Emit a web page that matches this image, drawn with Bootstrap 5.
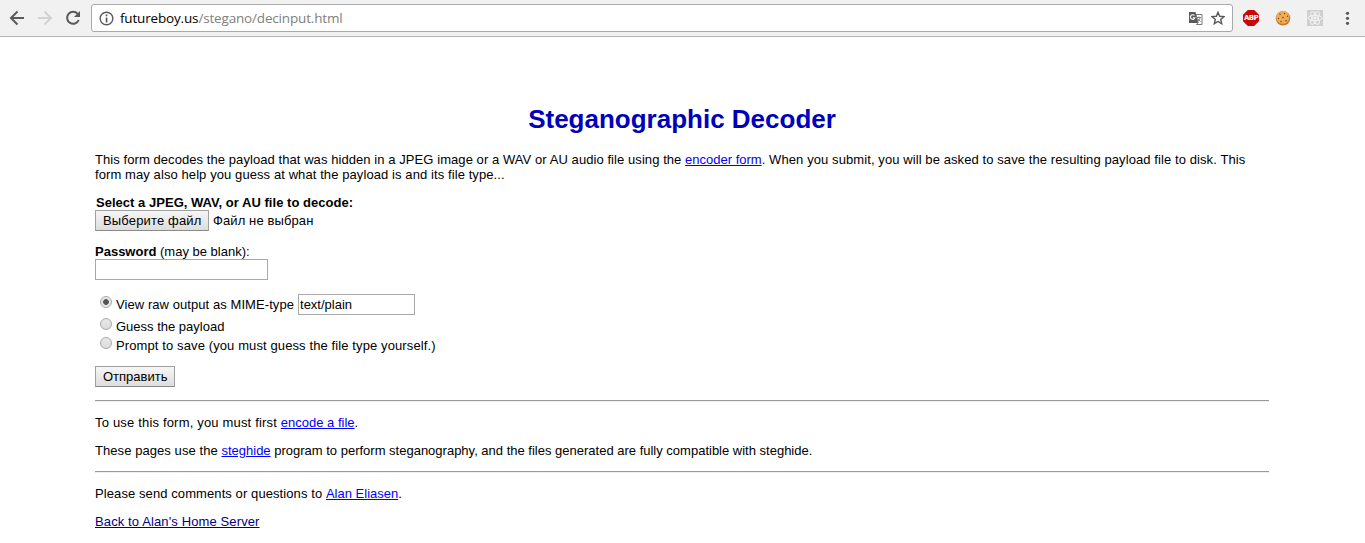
<!DOCTYPE html>
<html lang="ru">
<head>
<meta charset="utf-8">
<meta name="viewport" content="width=device-width, initial-scale=1">
<title>Steganographic Decoder</title>
<link href="https://cdn.jsdelivr.net/npm/bootstrap@5.3.0/dist/css/bootstrap.min.css" rel="stylesheet">
<style>
body{font:13px/15px "Liberation Sans",Arial,sans-serif;color:#000;background:#fff;overflow:hidden}
.toolbar{height:37px;background:#f1f1f1;border-bottom:1px solid #b6b4b6}
.toolbar svg{display:block;flex:none}
.nav-icons{width:91px;padding-left:8px;gap:10px}
.omnibox{width:1142px;height:28px;border:1px solid #a9a9a9;border-radius:3px;padding:0 7px}
.url{font:13.5px/20px "Open Sans","Noto Sans",sans-serif;letter-spacing:-.17px;color:#808080;margin-left:6px;white-space:nowrap}
.ext-icons{padding-left:10px;gap:16px}
.abp{width:16px;height:16px;background:#cb0606;clip-path:polygon(30% 0,70% 0,100% 30%,100% 70%,70% 100%,30% 100%,0 70%,0 30%);font:bold 7px/16px "DejaVu Sans",sans-serif;letter-spacing:-.6px;color:#fff}
.doc{padding:67px 96px 0 95px}
.doc h1{font-size:26px;line-height:30px;font-weight:700;color:#0000bb;margin:0 0 18px}
.doc p{margin:0 0 13px;white-space:nowrap}
.doc a{color:#00f;letter-spacing:0}
.doc a.seen{color:#000080;letter-spacing:.12px}
.ls-s{letter-spacing:.07px}
.ls-m{letter-spacing:.09px}
.ls-l{letter-spacing:.11px}
.ls-xl{letter-spacing:.18px}
.intro-start{letter-spacing:.071px}
.file-label{padding-left:1px;letter-spacing:.025px}
.rule{border:0;height:2px;background:linear-gradient(#9a9a9a 50%,#eee 50%);opacity:1;margin:0 0 13px}
.push{font:inherit;line-height:15px;height:21px;padding:2px 7px;color:#000;border:1px solid #a0a0a0;border-bottom-color:#8a8a8a;border-radius:0;background:linear-gradient(#f6f6f6,#ddd)}
.push-file{width:114px;letter-spacing:.15px;white-space:nowrap}
.field{height:21px;border:1px solid #a9a9a9;border-radius:0;padding:1px;font:inherit;color:#000}
.field-pass{width:173px}
.field-mime{width:117px;margin-left:4px}
.choices{margin:13px 0 11px}
.choice{height:19px}
.choice-first{height:22px;margin-bottom:2px}
.dot{appearance:none;width:12px;height:12px;border:1px solid #a9a9a9;border-radius:50%;background:linear-gradient(#e8e8e8,#dcdcdc);margin:0 4px 5px 5px;flex:none}
.choice .dot{margin-bottom:6px}
.dot:checked{background:radial-gradient(circle,#555 0 2.5px,#e6e6e6 3.2px)}
</style>
</head>
<body>
<header class="toolbar d-flex align-items-center">
  <nav class="nav-icons d-flex">
    <svg width="18" height="18" viewBox="0 0 18 18" fill="none" stroke="#5a5a5a" stroke-width="2"><path d="M16 9H3M9.500 2.500L3 9l6.500 6.500"/></svg>
    <svg width="18" height="18" viewBox="0 0 18 18" fill="none" stroke="#d2d2d2" stroke-width="2"><path d="M2 9h13M8.500 2.500L15 9l-6.500 6.500"/></svg>
    <svg width="18" height="18" viewBox="0 0 18 18"><path d="M13.700 4.900A6 6 0 1 0 14.700 11" fill="none" stroke="#5a5a5a" stroke-width="2"/><path d="M16 2v6h-6z" fill="#5a5a5a"/></svg>
  </nav>
  <div class="omnibox bg-white d-flex align-items-center">
    <svg width="15" height="15" viewBox="0 0 15 15"><circle cx="7.500" cy="7.500" r="6.300" fill="none" stroke="#5a5a5a" stroke-width="1.400"/><path d="M6.700 3.500h1.700v1.700H6.700zM6.700 6.500h1.700v5H6.700z" fill="#5a5a5a"/></svg>
    <span class="url"><span class="text-black">futureboy.us</span>/stegano/decinput.html</span>
    <svg class="ms-auto" width="15" height="15" viewBox="0 0 15 15"><path d="M1 1h6.500l3 11H1z" fill="#5a5a5a"/><path d="M8 3.500h6v10H8.500l1.700-2z" fill="#fff" stroke="#777"/><path d="M6.500 4.500A2.300 2.300 0 1 0 7 6.700H4.800" fill="none" stroke="#fff" stroke-width="1.100"/><path d="M9 6.500h4M11 5.500v1M12.200 6.500c-.5 2-1.500 3-2.500 4M10 8l2.500 2.700" fill="none" stroke="#777" stroke-width=".9"/></svg>
    <svg class="ms-2" width="14" height="14" viewBox="0 0 14 14"><path d="M7 1.300l1.650 4 4.350.35-3.300 2.850 1 4.200L7 10.450 3.300 12.700l1-4.200L1 5.650l4.350-.35z" fill="#fff" stroke="#5a5a5a" stroke-width="1.400"/></svg>
  </div>
  <div class="ext-icons d-flex align-items-center">
    <span class="abp d-flex justify-content-center">ABP</span>
    <svg width="16" height="16" viewBox="0 0 16 16"><circle cx="8" cy="8.300" r="7.300" fill="#c9792b"/><circle cx="7.700" cy="7.300" r="6.500" fill="#edac55"/><g fill="#70401c"><circle cx="5" cy="4.300" r=".7"/><circle cx="9.500" cy="3.500" r=".7"/><circle cx="12.500" cy="6.300" r=".7"/><circle cx="8" cy="7.500" r=".8"/><circle cx="3.500" cy="8.500" r=".7"/><circle cx="6" cy="11.500" r=".7"/><circle cx="11" cy="10.700" r=".8"/></g></svg>
    <svg width="16" height="16" viewBox="0 0 16 16"><path d="M0 0h16v16H0z" fill="#cfcfcf"/><g fill="none" stroke="#f4f4f4"><ellipse cx="8" cy="8" rx="7" ry="2.700"/><ellipse cx="8" cy="8" rx="7" ry="2.700" transform="rotate(60 8 8)"/><ellipse cx="8" cy="8" rx="7" ry="2.700" transform="rotate(120 8 8)"/></g><circle cx="8" cy="8" r="1.400" fill="#f4f4f4"/></svg>
    <svg width="16" height="16" viewBox="0 0 16 16" fill="#5a5a5a"><circle cx="8.500" cy="3.300" r="1.600"/><circle cx="8.500" cy="8.300" r="1.600"/><circle cx="8.500" cy="13.300" r="1.600"/></svg>
  </div>
</header>
<main class="doc">
  <h1 class="text-center">Steganographic Decoder</h1>
  <p class="ls-m"><span class="intro-start">This form decodes the payload that was hidden in a JPEG image or a WAV or AU audio file using the </span><a href="#">encoder form</a>. When you submit, you will be asked to save the resulting payload file to disk. This<br>form may also help you guess at what the payload is and its file type...</p>
  <div class="file-label"><b>Select a JPEG, WAV, or AU file to decode:</b></div>
  <div class="file-row d-flex align-items-center"><button class="push push-file">Выберите файл</button><span class="ms-1 ls-l">Файл не выбран</span></div>
  <p></p>
  <div><b>Password</b> (may be blank):</div>
  <input class="field field-pass d-block">
  <div class="choices">
    <div class="choice-first d-flex align-items-center"><input type="radio" name="mode" class="dot" checked><span class="ls-s">View raw output as MIME-type</span><input class="field field-mime" value="text/plain"></div>
    <div class="choice d-flex align-items-center"><input type="radio" name="mode" class="dot"><span>Guess the payload</span></div>
    <div class="choice d-flex align-items-center"><input type="radio" name="mode" class="dot"><span class="ls-l">Prompt to save (you must guess the file type yourself.)</span></div>
  </div>
  <p><button class="push">Отправить</button></p>
  <hr class="rule">
  <p class="ls-xl">To use this form, you must first <a href="#">encode a file</a>.</p>
  <p><span class="ls-s">These pages use the </span><a href="#">steghide</a> program to perform steganography, and the files generated are fully compatible with steghide.</p>
  <hr class="rule">
  <p class="ls-m">Please send comments or questions to <a href="#">Alan Eliasen</a>.</p>
  <p><a class="seen" href="#">Back to Alan's Home Server</a></p>
</main>
<script src="https://cdn.jsdelivr.net/npm/bootstrap@5.3.0/dist/js/bootstrap.bundle.min.js"></script>
</body>
</html>
